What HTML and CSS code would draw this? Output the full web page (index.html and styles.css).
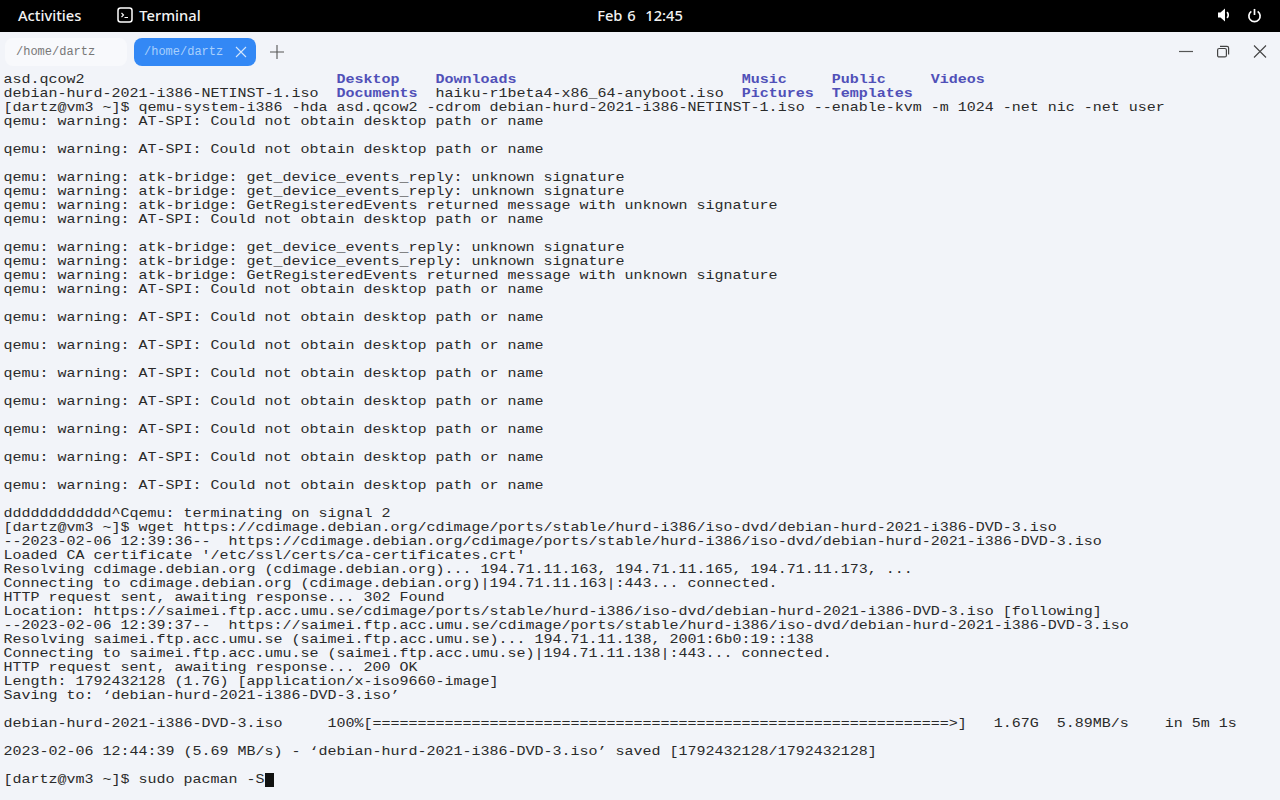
FILE: index.html
```html
<!DOCTYPE html>
<html lang="en">
<head>
<meta charset="utf-8">
<title>Terminal</title>
<link rel="stylesheet" href="styles.css">
</head>
<body>
<header class="topbar">
  <div class="topbar-left">
    <span class="activities">Activities</span>
    <span class="app">
      <svg class="app-icon" width="16" height="16" viewBox="0 0 16 16" fill="none" stroke="#fff"><rect x="1" y="1" width="14" height="14" rx="2.5" stroke-width="1.5"/><path d="M4.500 6l2 2-2 2M7.500 10.500h3.500" stroke-width="1.100"/></svg>
      Terminal
    </span>
  </div>
  <div class="clock">Feb 6&nbsp;&nbsp;12:45</div>
  <div class="tray">
    <svg width="14" height="14" viewBox="0 0 14 14" fill="#fff"><path d="M1 4.500h2.500L8 .5v13L3.500 9.500H1z"/><path d="M10 4.200a3.800 3.800 0 0 1 0 5.600" fill="none" stroke="#fff" stroke-width="1.700"/></svg>
    <svg width="15" height="15" viewBox="0 0 16 16" fill="none" stroke="#fff" stroke-width="1.800"><path d="M4.600 3.600a6 6 0 1 0 6.800 0"/><path d="M8 1v6.500"/></svg>
  </div>
</header>
<div class="tabbar">
  <div class="tab">/home/dartz</div>
  <div class="tab tab-active">/home/dartz
    <svg class="tab-close" width="12" height="12" viewBox="0 0 12 12" stroke="#d5e6fb" stroke-width="1.100"><path d="M1 1l10 10M11 1L1 11"/></svg>
  </div>
  <svg class="tab-add" width="16" height="16" viewBox="0 0 16 16" stroke="#555" stroke-width="1.100"><path d="M8 1v14M1 8h14"/></svg>
  <div class="controls">
    <svg width="14" height="14" viewBox="0 0 14 14" stroke="#555" stroke-width="1.200"><path d="M0 6.500h14"/></svg>
    <svg width="14" height="14" viewBox="0 0 14 14" fill="none" stroke="#444" stroke-width="1.200"><rect x="1.600" y="3.500" width="8.800" height="8.400" rx="1.500"/><path d="M4 1.300h7a1.600 1.600 0 0 1 1.600 1.600v6.500"/></svg>
    <svg width="14" height="14" viewBox="0 0 14 14" stroke="#444" stroke-width="1.100"><path d="M1 .5l12 12M13 .5L1 12.500"/></svg>
  </div>
</div>
<div class="term-wrap">
<pre class="term">asd.qcow2                            <b class="dir">Desktop</b>    <b class="dir">Downloads</b>                         <b class="dir">Music</b>     <b class="dir">Public</b>     <b class="dir">Videos</b>
debian-hurd-2021-i386-NETINST-1.iso  <b class="dir">Documents</b>  haiku-r1beta4-x86_64-anyboot.iso  <b class="dir">Pictures</b>  <b class="dir">Templates</b>
[dartz@vm3 ~]$ qemu-system-i386 -hda asd.qcow2 -cdrom debian-hurd-2021-i386-NETINST-1.iso --enable-kvm -m 1024 -net nic -net user
qemu: warning: AT-SPI: Could not obtain desktop path or name

qemu: warning: AT-SPI: Could not obtain desktop path or name

qemu: warning: atk-bridge: get_device_events_reply: unknown signature
qemu: warning: atk-bridge: get_device_events_reply: unknown signature
qemu: warning: atk-bridge: GetRegisteredEvents returned message with unknown signature
qemu: warning: AT-SPI: Could not obtain desktop path or name

qemu: warning: atk-bridge: get_device_events_reply: unknown signature
qemu: warning: atk-bridge: get_device_events_reply: unknown signature
qemu: warning: atk-bridge: GetRegisteredEvents returned message with unknown signature
qemu: warning: AT-SPI: Could not obtain desktop path or name

qemu: warning: AT-SPI: Could not obtain desktop path or name

qemu: warning: AT-SPI: Could not obtain desktop path or name

qemu: warning: AT-SPI: Could not obtain desktop path or name

qemu: warning: AT-SPI: Could not obtain desktop path or name

qemu: warning: AT-SPI: Could not obtain desktop path or name

qemu: warning: AT-SPI: Could not obtain desktop path or name

qemu: warning: AT-SPI: Could not obtain desktop path or name

dddddddddddd^Cqemu: terminating on signal 2
[dartz@vm3 ~]$ wget https://cdimage.debian.org/cdimage/ports/stable/hurd-i386/iso-dvd/debian-hurd-2021-i386-DVD-3.iso
--2023-02-06 12:39:36--  https://cdimage.debian.org/cdimage/ports/stable/hurd-i386/iso-dvd/debian-hurd-2021-i386-DVD-3.iso
Loaded CA certificate '/etc/ssl/certs/ca-certificates.crt'
Resolving cdimage.debian.org (cdimage.debian.org)... 194.71.11.163, 194.71.11.165, 194.71.11.173, ...
Connecting to cdimage.debian.org (cdimage.debian.org)|194.71.11.163|:443... connected.
HTTP request sent, awaiting response... 302 Found
Location: https://saimei.ftp.acc.umu.se/cdimage/ports/stable/hurd-i386/iso-dvd/debian-hurd-2021-i386-DVD-3.iso [following]
--2023-02-06 12:39:37--  https://saimei.ftp.acc.umu.se/cdimage/ports/stable/hurd-i386/iso-dvd/debian-hurd-2021-i386-DVD-3.iso
Resolving saimei.ftp.acc.umu.se (saimei.ftp.acc.umu.se)... 194.71.11.138, 2001:6b0:19::138
Connecting to saimei.ftp.acc.umu.se (saimei.ftp.acc.umu.se)|194.71.11.138|:443... connected.
HTTP request sent, awaiting response... 200 OK
Length: 1792432128 (1.7G) [application/x-iso9660-image]
Saving to: ‘debian-hurd-2021-i386-DVD-3.iso’

debian-hurd-2021-i386-DVD-3.iso     100%[================================================================>]   1.67G  5.89MB/s    in 5m 1s

2023-02-06 12:44:39 (5.69 MB/s) - ‘debian-hurd-2021-i386-DVD-3.iso’ saved [1792432128/1792432128]

[dartz@vm3 ~]$ sudo pacman -S<span class="cursor"> </span></pre>
</div>
</body>
</html>
```
FILE: styles.css
```css
* { box-sizing: border-box; }
html, body { margin: 0; height: 100%; }
body {
  width: 1280px;
  height: 800px;
  overflow: hidden;
  background: #f2f4f9;
  display: flex;
  flex-direction: column;
}
.topbar {
  height: 32px;
  flex: none;
  background: #000;
  color: #f2f2f2;
  font: 500 14.7px/30px "Noto Sans", sans-serif;
  display: grid;
  grid-template-columns: 1fr auto 1fr;
  align-items: center;
  padding: 0 18px 2px 18px;
}
.topbar-left { display: flex; align-items: center; gap: 36px; }
.app { display: flex; align-items: center; gap: 6px; }
.clock { word-spacing: 1px; }
.tray { display: flex; justify-content: flex-end; align-items: center; gap: 16px; }
.tabbar {
  height: 40px;
  flex: none;
  display: flex;
  align-items: center;
  padding: 0 13px 0 5px;
  font: 12px/1 "Liberation Mono", monospace;
}
.tab {
  width: 122px;
  height: 28px;
  border-radius: 8px;
  display: flex;
  align-items: center;
  padding-left: 11px;
  color: #777;
  background: #f8f9fc;
}
.tab-active {
  margin-left: 7px;
  background: #3388f5;
  color: #a9d0fc;
  padding-left: 10px;
}
.tab-close { margin-left: 12px; }
.tab-add { margin-left: 13px; }
.controls { margin-left: auto; display: flex; align-items: center; gap: 23px; }
.term-wrap {
  height: 728px;
  flex: none;
  overflow: hidden;
  padding-top: 1px;
}
.term {
  margin: 0 0 -102px;
  padding: 0 0 0 3.5px;
  font: 15px/16px "Liberation Mono", monospace;
  color: #2a2a2a;
  transform: scaleY(0.875);
  transform-origin: 0 0;
}
.dir { color: #5050b8; font-weight: 700; }
.cursor { background: #111; display: inline-block; width: 9px; height: 16px; vertical-align: top; }
```
